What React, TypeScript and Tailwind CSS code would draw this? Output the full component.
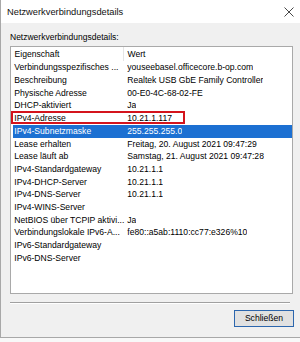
import React from "react";

const rows: [string, string][] = [
  ["Verbindungsspezifisches ...", "youseebasel.officecore.b-op.com"],
  ["Beschreibung", "Realtek USB GbE Family Controller"],
  ["Physische Adresse", "00-E0-4C-68-02-FE"],
  ["DHCP-aktiviert", "Ja"],
  ["IPv4-Adresse", "10.21.1.117"],
  ["IPv4-Subnetzmaske", "255.255.255.0"],
  ["Lease erhalten", "Freitag, 20. August 2021 09:47:29"],
  ["Lease läuft ab", "Samstag, 21. August 2021 09:47:28"],
  ["IPv4-Standardgateway", "10.21.1.1"],
  ["IPv4-DHCP-Server", "10.21.1.1"],
  ["IPv4-DNS-Server", "10.21.1.1"],
  ["IPv4-WINS-Server", ""],
  ["NetBIOS über TCPIP aktivi...", "Ja"],
  ["Verbindungslokale IPv6-A...", "fe80::a5ab:1110:cc77:e326%10"],
  ["IPv6-Standardgateway", ""],
  ["IPv6-DNS-Server", ""],
];

export default function App() {
  return (
    <div className="w-[300px] h-[342px] bg-[#f8f8f8] font-['Liberation_Sans',Arial,sans-serif] text-black overflow-hidden">
      <div className="h-[338px] bg-[#f0f0f0] border-l border-b border-[#a8a8a8] flex flex-col">
        {/* Title bar */}
        <div className="h-[23px] bg-white flex items-center justify-between pl-[6px] pr-[5px] shrink-0">
          <span className="text-[9.3px] leading-[12px] text-[#111]">Netzwerkverbindungsdetails</span>
          <svg width="10" height="10" viewBox="0 0 10 10" className="mr-[1px]">
            <path d="M0.5 0.5 L9.5 9.5 M9.5 0.5 L0.5 9.5" stroke="#333" strokeWidth="0.9" fill="none" />
          </svg>
        </div>
        {/* Body */}
        <div className="flex flex-col pl-[9px]">
          <div className="pt-[9px] text-[8.5px] leading-[10px]">Netzwerkverbindungsdetails:</div>
          <div className="relative mt-[4px] w-[283px] h-[248px] bg-white border border-[#a9a9a9] text-[8.6px]">
            {/* Header */}
            <div className="h-[14.5px] flex items-center pl-[3.5px] relative">
              <div className="w-[113px] shrink-0">Eigenschaft</div>
              <div>Wert</div>
              <div className="absolute left-[112px] top-0 h-[14px] w-px bg-[#e5e5e5]" />
            </div>
            {rows.map(([k, v], i) => {
              const sel = i === 5;
              return (
                <div
                  key={i}
                  className={
                    "h-[12.69px] ml-[1.7px] pl-[1.6px] flex items-center whitespace-nowrap " +
                    (sel ? "bg-[#1c70d2] text-white" : "")
                  }
                >
                  <div className="w-[113px] shrink-0">{k}</div>
                  <div className="overflow-hidden">{v}</div>
                </div>
              );
            })}
            <div className="absolute left-0 top-[63.5px] w-[174px] h-[13.5px] border-2 border-[#d4141c]" />
          </div>
          <div className="mt-[8px] w-[280px] h-[2px] border-t border-[#a0a0a0] border-b border-b-white" />
          <div className="flex justify-end w-[284px] mt-[6px]">
            <div className="w-[60px] h-[17px] bg-[#e1e1e1] border-[1.5px] border-[#2c66ad] flex items-center justify-center text-[8.6px]">
              Schließen
            </div>
          </div>
        </div>
      </div>
    </div>
  );
}
